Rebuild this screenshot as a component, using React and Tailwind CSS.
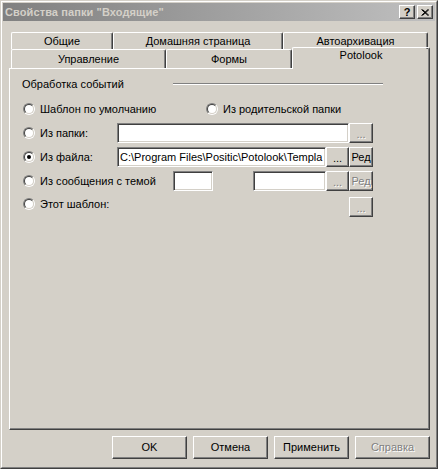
import React from "react";

const raised =
  "border border-t-white border-l-white border-r-[#404040] border-b-[#404040] shadow-[inset_-1px_-1px_0_#808080,inset_1px_1px_0_#d4d0c8]";
const sunken =
  "bg-white border border-t-[#808080] border-l-[#808080] border-r-white border-b-white shadow-[inset_1px_1px_0_#404040,inset_-1px_-1px_0_#d4d0c8]";
const disabledText = "text-[#808080] [text-shadow:1px_1px_0_#ffffff]";
const tabCls =
  "shrink-0 border-t border-l border-r border-t-white border-l-white border-r-[#404040] shadow-[inset_-1px_0_0_#808080] rounded-t-[2px] flex items-center justify-center whitespace-nowrap";

function Radio({ checked }) {
  return (
    <div className="w-[12px] h-[12px] shrink-0 rounded-full border border-t-[#808080] border-l-[#808080] border-r-white border-b-white">
      <div className="w-full h-full rounded-full bg-white border border-t-[#404040] border-l-[#404040] border-r-[#d4d0c8] border-b-[#d4d0c8] flex items-center justify-center">
        {checked && <div className="w-[4px] h-[4px] rounded-full bg-black" />}
      </div>
    </div>
  );
}

function Btn({ w, h = "h-[20px]", children, disabled }) {
  return (
    <div
      className={`${raised} ${w} ${h} shrink-0 flex items-center justify-center leading-none ${
        disabled ? disabledText : "text-black"
      }`}
    >
      {children}
    </div>
  );
}

function Dots({ disabled }) {
  return <span className={`pt-[3px] ${disabled ? disabledText : ""}`}>...</span>;
}

export default function App() {
  return (
    <div className="w-[438px] h-[469px] bg-[#d4d0c8] font-['Liberation_Sans',Arial,sans-serif] text-[11px] text-black leading-[13px] overflow-hidden">
      <div className="w-full h-full border border-t-[#d4d0c8] border-l-[#d4d0c8] border-r-[#404040] border-b-[#404040]">
        <div className="w-full h-full border border-t-white border-l-white border-r-[#808080] border-b-[#808080] p-[1px] flex flex-col">
          {/* Title bar */}
          <div className="h-[18px] shrink-0 bg-gradient-to-r from-[#808080] to-[#c0c0c0] flex items-center justify-between pl-[2px] pr-[2px]">
            <span className="font-bold text-[#d4d0c8] text-[11px] tracking-[0.1px]">
              Свойства папки "Входящие"
            </span>
            <div className="flex gap-[2px]">
              <div className={`${raised} w-[16px] h-[14px] bg-[#d4d0c8] flex items-center justify-center font-bold text-[11px] leading-none`}>
                ?
              </div>
              <div className={`${raised} w-[16px] h-[14px] bg-[#d4d0c8] flex items-center justify-center`}>
                <svg width="8" height="7" viewBox="0 0 8 7">
                  <path d="M0.5 0.5 L7 6.5 M1.5 0.5 L8 6.5 M7 0.5 L0.5 6.5 M8 0.5 L1.5 6.5" stroke="#000" strokeWidth="1" fill="none" />
                </svg>
              </div>
            </div>
          </div>

          {/* Tab control */}
          <div className="mt-[11px] ml-[6px] w-[421px] flex flex-col shrink-0">
            <div className="flex h-[17px] pl-[2px] shrink-0">
              <div className={`${tabCls} w-[102px] h-[17px]`}>Общие</div>
              <div className={`${tabCls} w-[170px] h-[17px]`}>Домашняя страница</div>
              <div className={`${tabCls} w-[145px] h-[17px]`}>Автоархивация</div>
            </div>
            <div className="flex h-[20px] items-end shrink-0">
              <div className="w-[2px] h-[20px] shrink-0 border-b border-b-white" />
              <div className="w-[155px] h-[20px] shrink-0 flex flex-col border-b border-b-white">
                <div className={`${tabCls} h-[19px]`}>Управление</div>
              </div>
              <div className="w-[126px] h-[20px] shrink-0 flex flex-col border-b border-b-white">
                <div className={`${tabCls} h-[19px]`}>Формы</div>
              </div>
              <div className="w-[138px] h-[22px] shrink-0 border-t border-l border-r border-t-white border-l-white border-r-[#404040] shadow-[inset_-1px_0_0_#808080] rounded-t-[2px] flex justify-center pt-[1px]">
                Potolook
              </div>
            </div>

            {/* Panel */}
            <div className="h-[361px] shrink-0 border-l border-r border-b border-l-white border-r-[#404040] border-b-[#404040] shadow-[inset_-1px_-1px_0_#808080] flex flex-col">
              {/* group heading */}
              <div className="flex items-center h-[12px] mt-[9px] pl-[12px]">
                <span className="w-[151px] shrink-0 whitespace-nowrap">Обработка событий</span>
                <div className="w-[210px] h-[2px] border-t border-t-[#808080] border-b border-b-white" />
              </div>

              <div className="flex flex-col gap-[4px] mt-[9px] pl-[13px]">
                {/* row 1 */}
                <div className="flex items-center h-[20px]">
                  <div className="flex items-center w-[183px]">
                    <Radio />
                    <span className="ml-[5px] whitespace-nowrap">Шаблон по умолчанию</span>
                  </div>
                  <Radio />
                  <span className="ml-[5px] whitespace-nowrap">Из родительской папки</span>
                </div>

                {/* row 2 */}
                <div className="flex items-center h-[20px]">
                  <div className="flex items-center w-[94px]">
                    <Radio />
                    <span className="ml-[5px] whitespace-nowrap">Из папки:</span>
                  </div>
                  <div className={`${sunken} w-[232px] h-[20px]`} />
                  <Btn w="w-[24px]" disabled>
                    <Dots disabled />
                  </Btn>
                </div>

                {/* row 3 */}
                <div className="flex items-center h-[20px]">
                  <div className="flex items-center w-[94px]">
                    <Radio checked />
                    <span className="ml-[5px] whitespace-nowrap">Из файла:</span>
                  </div>
                  <div className={`${sunken} w-[209px] h-[20px] overflow-hidden whitespace-nowrap pl-[2px] flex items-center`}>
                    C:\Program Files\Positic\Potolook\Templa
                  </div>
                  <Btn w="w-[23px]">
                    <Dots />
                  </Btn>
                  <Btn w="w-[24px]">Ред</Btn>
                </div>

                {/* row 4 */}
                <div className="flex items-center h-[20px]">
                  <div className="flex items-center w-[150px]">
                    <Radio />
                    <span className="ml-[5px] whitespace-nowrap">Из сообщения с темой</span>
                  </div>
                  <div className={`${sunken} w-[40px] h-[20px]`} />
                  <div className={`${sunken} ml-[40px] w-[73px] h-[20px]`} />
                  <Btn w="w-[23px]" disabled>
                    <Dots disabled />
                  </Btn>
                  <Btn w="w-[24px]" disabled>
                    Ред
                  </Btn>
                </div>

                {/* row 5 */}
                <div className="flex items-start h-[20px]">
                  <div className="flex items-center w-[326px] h-[20px] -mt-[1px]">
                    <Radio />
                    <span className="ml-[5px] whitespace-nowrap">Этот шаблон:</span>
                  </div>
                  <div className="mt-[2px]">
                    <Btn w="w-[24px]" disabled>
                      <Dots disabled />
                    </Btn>
                  </div>
                </div>
              </div>
            </div>
          </div>

          {/* Bottom buttons */}
          <div className="flex justify-end gap-[6px] mt-[6px] pr-[5px] shrink-0">
            <Btn w="w-[75px]" h="h-[23px]">OK</Btn>
            <Btn w="w-[75px]" h="h-[23px]">Отмена</Btn>
            <Btn w="w-[75px]" h="h-[23px]">Применить</Btn>
            <Btn w="w-[75px]" h="h-[23px]" disabled>Справка</Btn>
          </div>
        </div>
      </div>
    </div>
  );
}
